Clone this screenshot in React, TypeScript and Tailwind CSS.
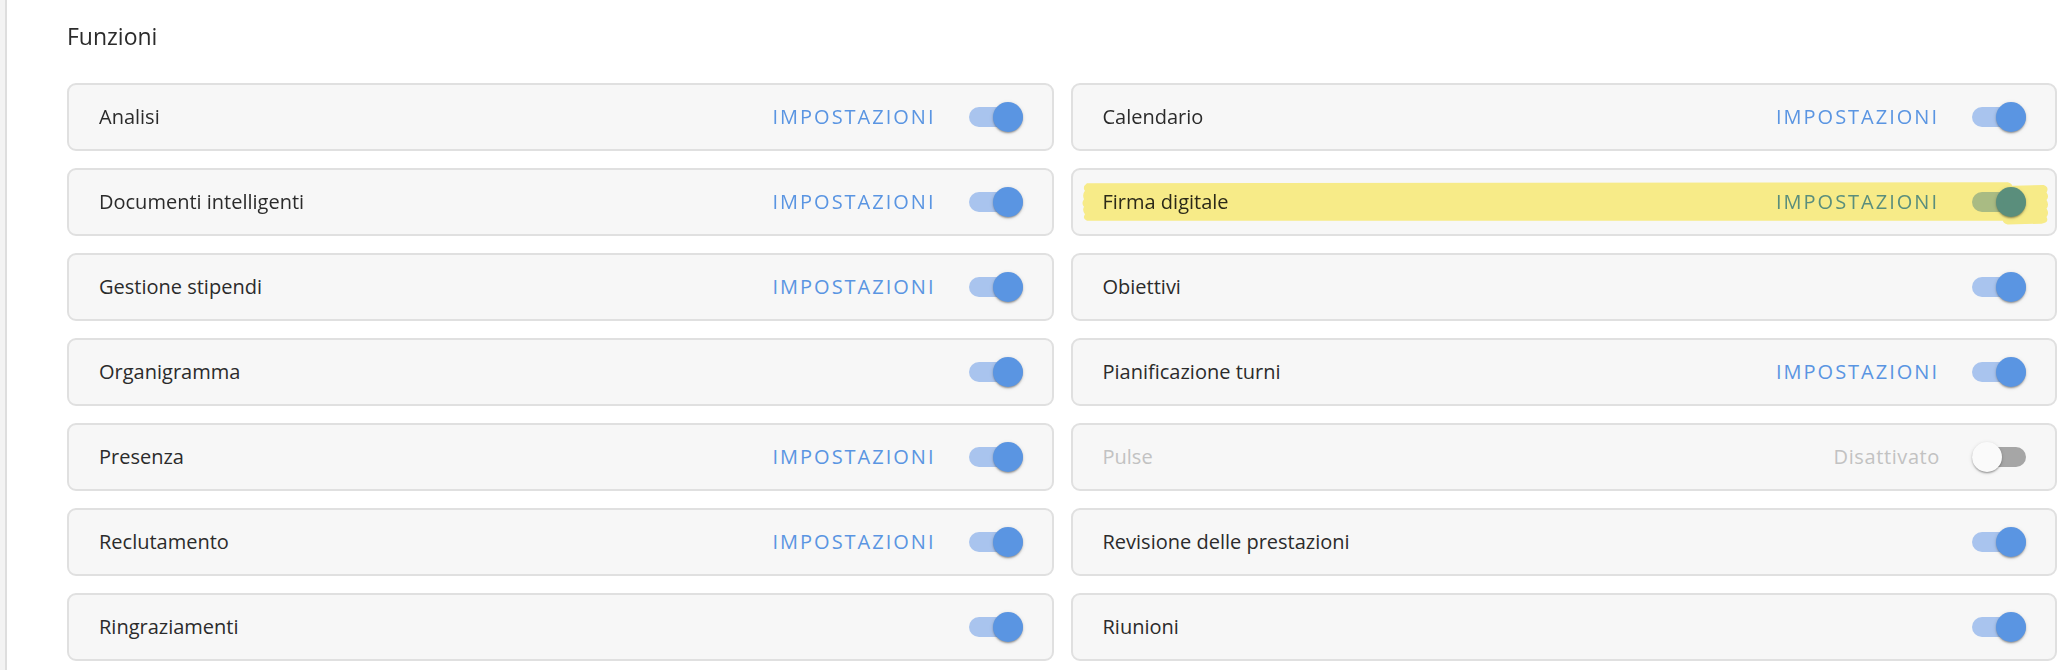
import React from 'react';

type Feature = {
  name: string;
  settings?: boolean;
  enabled: boolean;
  highlight?: boolean;
};

const left: Feature[] = [
  { name: 'Analisi', settings: true, enabled: true },
  { name: 'Documenti intelligenti', settings: true, enabled: true },
  { name: 'Gestione stipendi', settings: true, enabled: true },
  { name: 'Organigramma', enabled: true },
  { name: 'Presenza', settings: true, enabled: true },
  { name: 'Reclutamento', settings: true, enabled: true },
  { name: 'Ringraziamenti', enabled: true },
];

const right: Feature[] = [
  { name: 'Calendario', settings: true, enabled: true },
  { name: 'Firma digitale', settings: true, enabled: true, highlight: true },
  { name: 'Obiettivi', enabled: true },
  { name: 'Pianificazione turni', settings: true, enabled: true },
  { name: 'Pulse', enabled: false },
  { name: 'Revisione delle prestazioni', enabled: true },
  { name: 'Riunioni', enabled: true },
];

function Toggle({ on }: { on: boolean }) {
  return (
    <div className="relative w-[54px] h-[30px] shrink-0">
      <div
        className={`absolute left-0 right-0 top-[5px] h-[20px] rounded-full ${on ? 'bg-[#a9c4ee]' : 'bg-[#a6a6a6]'}`}
      />
      <div
        className={`absolute top-0 w-[30px] h-[30px] rounded-full shadow-[0_2px_2px_-1px_rgba(0,0,0,0.25),0_1px_2px_rgba(0,0,0,0.14),0_1px_4px_rgba(0,0,0,0.12)] ${on ? 'left-[24px] bg-[#5a95e2]' : 'left-0 bg-[#fafafa]'}`}
      />
    </div>
  );
}

// yellow marker stroke drawn over the "Firma digitale" row
function Highlight() {
  return (
    <svg
      className="absolute inset-0 w-full h-full pointer-events-none mix-blend-multiply"
      viewBox="0 0 986 68"
      preserveAspectRatio="none"
    >
      <path
        d="M14 14 L938 13 Q944 14 943 22 L943 48 Q942 54 936 54 L14 54 Q9 52 12 47 Q9 43 11 39 Q8 35 11 31 Q9 26 12 22 Q9 18 14 14 Z"
        fill="#fff38c"
      />
      <path
        d="M934 17 L974 16 Q980 18 977 24 Q980 28 977 32 Q980 37 977 41 Q980 46 977 50 Q980 56 972 57 L938 58 Q931 56 934 50 Q931 44 935 38 Q932 32 935 27 Q932 21 934 17 Z"
        fill="#fff38c"
      />
    </svg>
  );
}

function Card({ f }: { f: Feature }) {
  return (
    <div className="relative flex items-center h-[68px] pl-[30px] pr-[29px] bg-[#f7f7f7] border-2 border-[#e0e0e0] rounded-[9px]">
      <span className={`flex-1 text-[20px] ${f.enabled ? 'text-[#2b2b2b]' : 'text-[#c2c2c2]'}`}>
        {f.name}
      </span>
      {f.settings && (
        <span className="mr-[33px] text-[20px] tracking-[0.1em] text-[#5a95e2]">IMPOSTAZIONI</span>
      )}
      {!f.enabled && <span className="mr-[32px] text-[20px] tracking-[0.03em] text-[#c2c2c2]">Disattivato</span>}
      <Toggle on={f.enabled} />
      {f.highlight && <Highlight />}
    </div>
  );
}

export default function App() {
  return (
    <div className="flex w-[2066px] h-[670px] bg-white overflow-hidden font-['Open_Sans','Noto_Sans',sans-serif]">
      <div className="w-[7px] shrink-0 bg-[#f3f3f3] border-r-2 border-[#dedede]" />
      <div className="flex-1 pl-[60px] pr-[9px]">
        <h2 className="pt-[21px] h-[83px] text-[23px] leading-[30px] text-[#2b2b2b]">Funzioni</h2>
        <div className="grid grid-cols-2 gap-[17px]">
          {left.map((f, i) => (
            <React.Fragment key={f.name}>
              <Card f={f} />
              <Card f={right[i]} />
            </React.Fragment>
          ))}
        </div>
      </div>
    </div>
  );
}
